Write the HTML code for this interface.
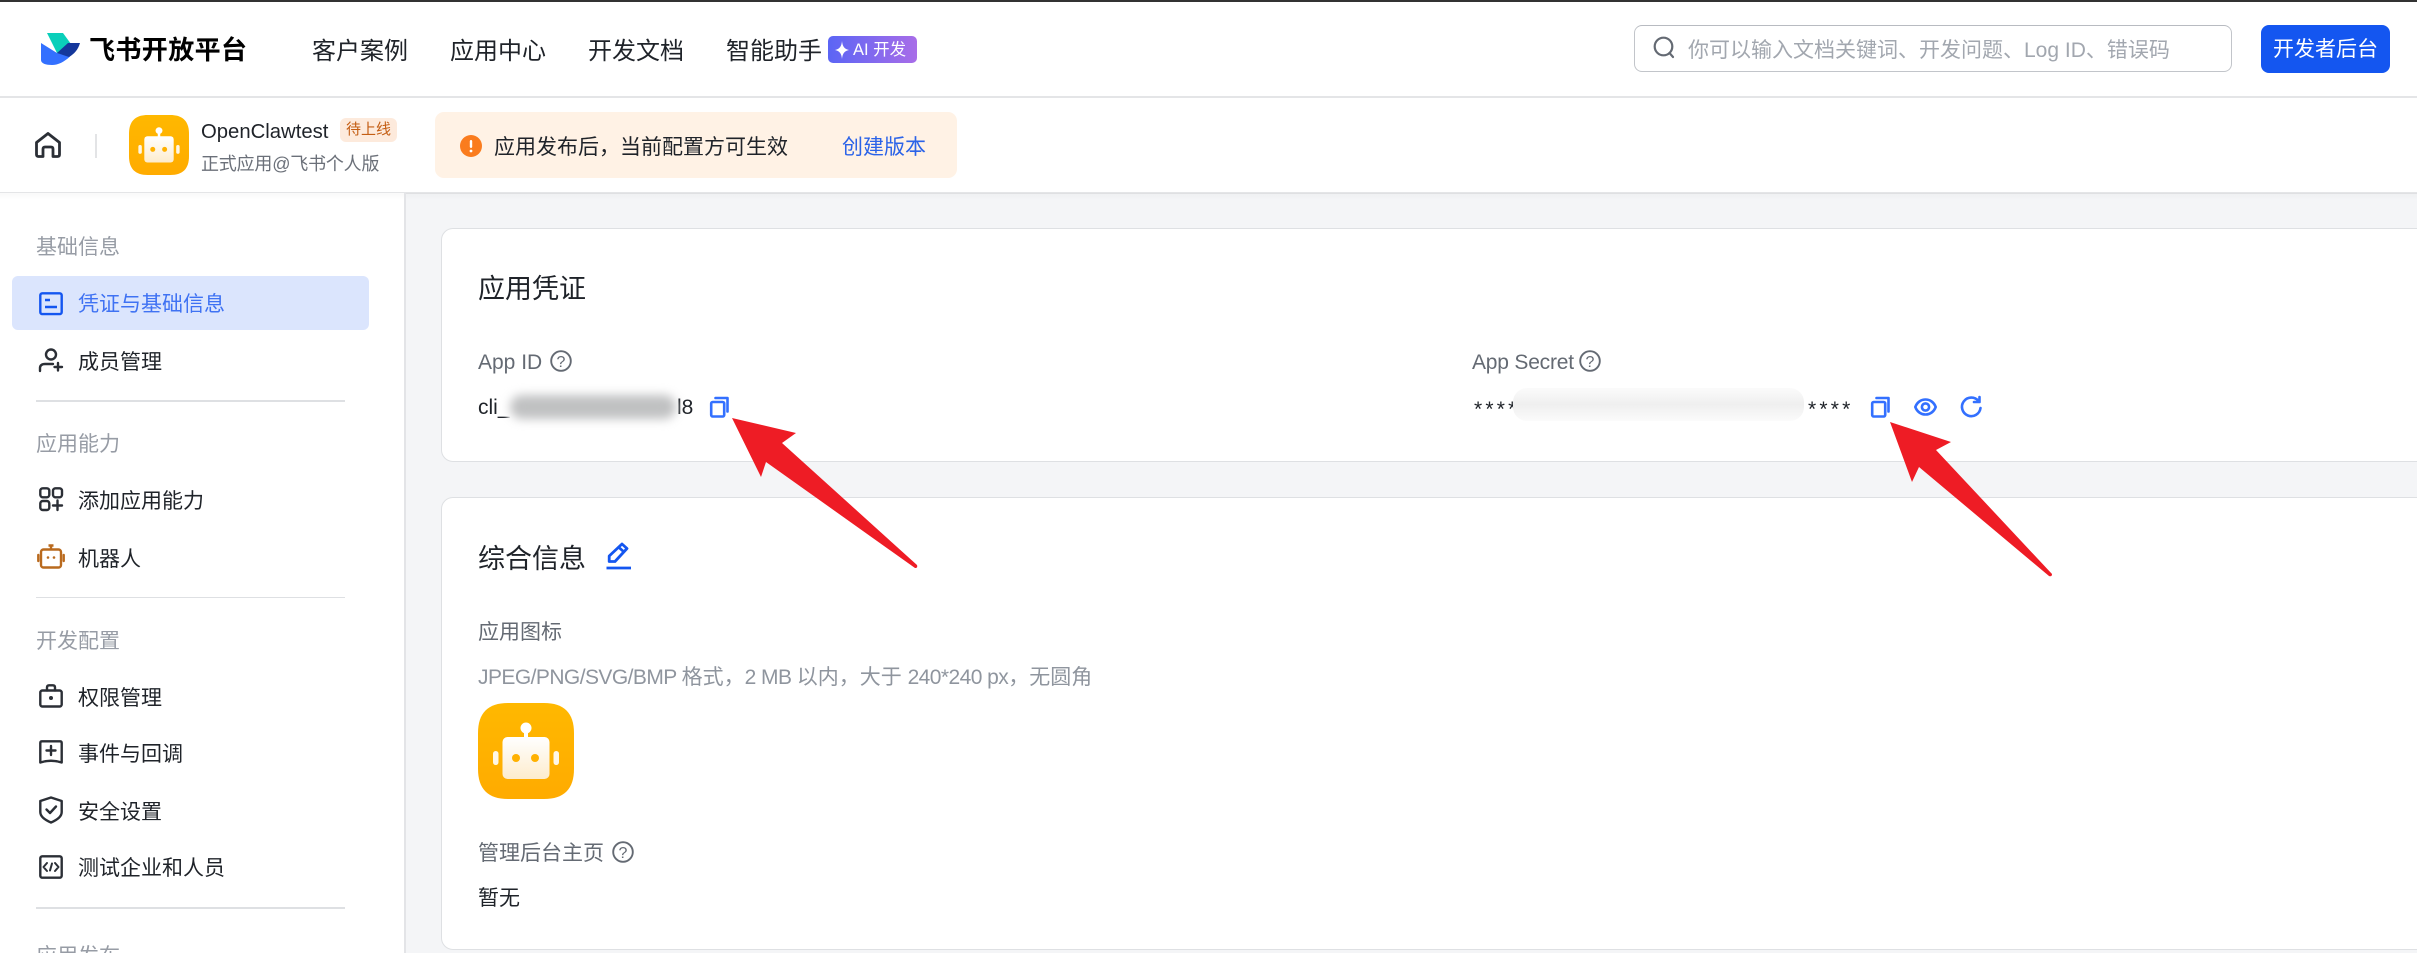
<!DOCTYPE html>
<html lang="zh-CN"><head><meta charset="utf-8"><title>飞书开放平台</title>
<style>
html,body{margin:0;padding:0;width:2417px;height:953px;overflow:hidden;background:#f4f5f7}
body{position:relative;font-family:"Liberation Sans","Noto Sans CJK SC",sans-serif;font-size:21px;color:#1f2329}
.a{position:absolute;white-space:nowrap}
.t{position:absolute;white-space:nowrap;line-height:30px;height:30px;margin-top:1.5px}
svg{position:absolute;overflow:visible}
.ln{position:absolute;background:#dee0e3}
.sec{color:#979ca5}
.lab{color:#646a73}
.ic{fill:none;stroke:#2b2f36;stroke-width:2.4;stroke-linecap:round;stroke-linejoin:round}
.bl{fill:none;stroke:#3370ff;stroke-width:2.6;stroke-linecap:round;stroke-linejoin:round}
.n{letter-spacing:-.56px}
</style></head><body>
<!-- header -->
<div class="a" style="left:0;top:0;width:2417px;height:192px;background:#fff"></div>
<div class="a" style="left:0;top:0;width:2417px;height:1.5px;background:#333"></div>
<div class="ln" style="left:0;top:96px;width:2417px;height:1.5px;background:#e4e5e7"></div>
<div class="ln" style="left:0;top:192px;width:2417px;height:1.5px;background:#e4e5e7"></div>
<svg style="left:0;top:0" width="100" height="96">
<path d="M47 33H63L71 44L58 55Z" fill="#0acfba"/>
<path d="M41 43L57 53L70 56.500C64 62 58 65 52 65C46 65 41 63.500 41 60Z" fill="#3370ff"/>
<path d="M57 53L68 43L80 43C78 50 74 54 69 57Z" fill="#14379b"/>
</svg>
<div class="t" style="left:89px;top:33px;font-size:26px;font-weight:700;color:#000;letter-spacing:.4px">飞书开放平台</div>
<div class="t" style="left:312px;top:35px;font-size:24px">客户案例</div>
<div class="t" style="left:450px;top:35px;font-size:24px">应用中心</div>
<div class="t" style="left:588px;top:35px;font-size:24px">开发文档</div>
<div class="t" style="left:726px;top:35px;font-size:24px">智能助手</div>
<div class="a" style="left:828px;top:36px;width:89px;height:27px;border-radius:5px;background:linear-gradient(90deg,#5b65f5,#a86de8)"></div>
<svg style="left:834px;top:41px" width="16" height="18"><path d="M8 0C8.500 5 10 8 15 9C10 10 8.500 13 8 18C7.500 13 6 10 1 9C6 8 7.500 5 8 0Z" fill="#fff"/></svg>
<div class="t" style="left:853px;top:33.500px;font-size:16.500px;color:#fff">AI 开发</div>
<div class="a" style="left:1634px;top:25px;width:596px;height:45px;border:1.500px solid #c2c5ca;border-top-color:#b8bbc1;border-radius:8px;background:#fff"></div>
<svg style="left:1653px;top:36px" width="24" height="24"><circle cx="10.500" cy="10.500" r="8.800" fill="none" stroke="#646a73" stroke-width="2.200"/><path d="M16.500 17L20 21" stroke="#646a73" stroke-width="2.200" stroke-linecap="round"/></svg>
<div class="t" style="left:1688px;top:34px;color:#a2a7af;font-size:21px">你可以输入文档关键词、开发问题、Log ID、错误码</div>
<div class="a" style="left:2261px;top:25px;width:129px;height:48px;border-radius:8px;background:#1456f0"></div>
<div class="t" style="left:2273px;top:33.500px;color:#fff">开发者后台</div>
<!-- subheader -->
<svg style="left:35px;top:132px" width="26" height="26"><path class="ic" style="stroke-width:2.800" d="M1.500 10.500L13 1.500L24.500 10.500V22.500Q24.500 24.500 22.500 24.500H18V17Q18 15 16 15H10Q8 15 8 17V24.500H3.500Q1.500 24.500 1.500 22.500Z"/></svg>
<div class="ln" style="left:95px;top:134px;width:1.500px;height:24px;background:#e3e4e6"></div>
<svg style="left:129px;top:115px" width="60" height="60" viewBox="0 0 96 96"><defs><linearGradient id="g" x1="0" y1="0" x2="0" y2="1"><stop offset="0" stop-color="#fff"/><stop offset="1" stop-color="#fdeccd"/></linearGradient><linearGradient id="o" x1="0" y1="0" x2="0" y2="1"><stop offset="0" stop-color="#ffb800"/><stop offset="1" stop-color="#ffab00"/></linearGradient></defs>
<path d="M30 0H66C86 0 96 10 96 30V66C96 86 86 96 66 96H30C10 96 0 86 0 66V30C0 10 10 0 30 0Z" fill="url(#o)"/><circle cx="48" cy="25" r="5.500" fill="#fff"/><rect x="46" y="26" width="4" height="10" fill="#fff"/><rect x="24.500" y="34" width="47" height="42" rx="5" fill="url(#g)"/><rect x="15" y="48" width="5.500" height="14" rx="2.700" fill="#fff" opacity=".9"/><rect x="75.500" y="48" width="5.500" height="14" rx="2.700" fill="#fff" opacity=".9"/><ellipse cx="38" cy="55" rx="4" ry="4" fill="#ffb100"/><ellipse cx="57" cy="55" rx="4" ry="4" fill="#ffb100"/></svg>
<div class="t" style="left:201px;top:115px;font-size:20.300px">OpenClawtest</div>
<div class="a" style="left:340px;top:118px;width:57px;height:24px;border-radius:6px;background:#fdeadc"></div>
<div class="t" style="left:346px;top:113.500px;font-size:15px;color:#c45e14">待上线</div>
<div class="t" style="left:201px;top:147px;font-size:18px;color:#6b7079;letter-spacing:-.2px">正式应用@飞书个人版</div>
<div class="a" style="left:435px;top:112px;width:522px;height:66px;border-radius:9px;background:#fff2e5"></div>
<svg style="left:460px;top:135px" width="22" height="22"><circle cx="11" cy="11" r="11" fill="#fa7c1e"/><rect x="9.800" y="5" width="2.400" height="8" rx="1.200" fill="#fff"/><circle cx="11" cy="16" r="1.400" fill="#fff"/></svg>
<div class="t" style="left:494px;top:131px">应用发布后，当前配置方可生效</div>
<div class="t" style="left:842px;top:131px;color:#2b63e8">创建版本</div>
<!-- sidebar -->
<div class="a" style="left:0;top:193px;width:404px;height:760px;background:#fff"></div>
<div class="a" style="left:0;top:193px;width:2417px;height:7px;background:linear-gradient(180deg,rgba(0,0,0,.025),rgba(0,0,0,0))"></div>
<div class="ln" style="left:404px;top:193px;width:1.500px;height:760px;background:#e3e4e7"></div>
<div class="t sec" style="left:36px;top:231px">基础信息</div>
<div class="a" style="left:12px;top:276px;width:357px;height:54px;border-radius:6px;background:#dbe5fd"></div>
<svg style="left:39px;top:292px" width="24" height="24"><rect x="1.300" y="1.300" width="21.400" height="20.800" rx="2" fill="none" stroke="#1456f0" stroke-width="2.400"/><path d="M6 8H11M6 15H18" stroke="#1456f0" stroke-width="2.400"/></svg>
<div class="t" style="left:78px;top:288px;color:#3f72f3">凭证与基础信息</div>
<svg style="left:39px;top:348px" width="24" height="24"><circle cx="12" cy="6.500" r="5" class="ic"/><path class="ic" d="M1 23V20Q1 16 6 16H14M19 15V22.500M15.500 19H23"/></svg>
<div class="t" style="left:78px;top:346px">成员管理</div>
<div class="ln" style="left:36px;top:400px;width:309px;height:2px"></div>
<div class="t sec" style="left:36px;top:428px">应用能力</div>
<svg style="left:39px;top:487px" width="24" height="24"><rect x="1.300" y="1.300" width="9" height="9" rx="2.500" class="ic"/><rect x="14" y="1.300" width="9" height="9" rx="2.500" class="ic"/><rect x="1.300" y="14" width="9" height="9" rx="2.500" class="ic"/><path class="ic" d="M18.500 13.500V23M14 18.500H23"/></svg>
<div class="t" style="left:78px;top:485px">添加应用能力</div>
<svg style="left:37px;top:544px" width="28" height="26" fill="none"><rect x="4" y="5.500" width="20" height="18" rx="2.500" stroke="#b96a1e" stroke-width="2.400"/><path d="M14 1V5M11.500 1.500H16.500" stroke="#b96a1e" stroke-width="2.400"/><path d="M1.300 11V17M26.700 11V17" stroke="#b96a1e" stroke-width="2.400" stroke-linecap="round"/><circle cx="11" cy="13.500" r="1.300" fill="#b96a1e"/><circle cx="17" cy="13.500" r="1.300" fill="#b96a1e"/></svg>
<div class="t" style="left:78px;top:543px">机器人</div>
<div class="ln" style="left:36px;top:596.500px;width:309px;height:1.500px"></div>
<div class="t sec" style="left:36px;top:625px">开发配置</div>
<svg style="left:39px;top:684px" width="24" height="24"><rect x="1.300" y="6.500" width="21.400" height="16" rx="2" class="ic"/><path class="ic" d="M8 6.500V3.500Q8 1.300 10 1.300H14Q16 1.300 16 3.500V6.500"/><circle cx="12" cy="14" r="2" fill="#2b2f36"/></svg>
<div class="t" style="left:78px;top:682px">权限管理</div>
<svg style="left:39px;top:740px" width="24" height="24"><path class="ic" d="M1.300 3Q1.300 1.300 3 1.300H21Q22.700 1.300 22.700 3V22.500Q12 19 1.300 22.500ZM12 6V15M7.500 10.500H16.500"/></svg>
<div class="t" style="left:78px;top:738px">事件与回调</div>
<svg style="left:39px;top:796px" width="24" height="28"><path class="ic" d="M12 1.500L22.700 5V16Q22.700 22 12 26.500Q1.300 22 1.300 16V5ZM7.500 13.500L11 17L17 10.500"/></svg>
<div class="t" style="left:78px;top:796px">安全设置</div>
<svg style="left:39px;top:855px" width="24" height="24"><rect x="1.300" y="1.300" width="21.400" height="21.400" rx="2" class="ic"/><path class="ic" style="stroke-width:2" d="M8 8L4.500 12L8 16M16 8L19.500 12L16 16M13 8.500L11 15.500"/></svg>
<div class="t" style="left:78px;top:852px">测试企业和人员</div>
<div class="ln" style="left:36px;top:907px;width:309px;height:2px"></div>
<div class="t sec" style="left:36px;top:940px">应用发布</div>
<!-- card 1 -->
<div class="a" style="left:441px;top:228px;width:2100px;height:232px;background:#fff;border:1.500px solid #dee0e3;border-radius:12px"></div>
<div class="t" style="left:478px;top:272px;font-size:27px">应用凭证</div>
<div class="t lab" style="left:478px;top:346px">App ID</div>
<svg style="left:550px;top:350px" width="22" height="22"><circle cx="11" cy="11" r="9.800" fill="none" stroke="#646a73" stroke-width="1.900"/><text x="11" y="17" text-anchor="middle" font-size="16" fill="#646a73" font-family="Liberation Sans">?</text></svg>
<div class="t" style="left:478px;top:391.500px">cli_</div>
<div class="t" style="left:677px;top:391.500px">l8</div>
<div class="a" style="left:505px;top:390px;width:172px;height:36px;border-radius:18px;background:#fff;filter:blur(2px)"></div>
<div class="a" style="left:510px;top:395px;width:166px;height:24px;border-radius:12px;background:#c0c1c2;filter:blur(5px)"></div>
<svg style="left:710px;top:396px" width="19" height="22"><rect x="1.200" y="6" width="13" height="14.500" rx="1.500" class="bl"/><path class="bl" d="M5.500 2H17.500V15.500"/></svg>
<div class="t lab" style="left:1472px;top:346.500px;letter-spacing:-.2px">App Secret</div>
<svg style="left:1579px;top:350px" width="22" height="22"><circle cx="11" cy="11" r="9.800" fill="none" stroke="#646a73" stroke-width="1.900"/><text x="11" y="17" text-anchor="middle" font-size="16" fill="#646a73" font-family="Liberation Sans">?</text></svg>
<div class="t" style="left:1474px;top:393.500px;letter-spacing:3.200px">****</div>
<div class="t" style="left:1808px;top:393.500px;letter-spacing:3.200px">****</div>
<div class="a" style="left:1513px;top:388px;width:291px;height:33px;border-radius:14px;background:linear-gradient(180deg,#fbfbfb,#efefef 50%,#fbfbfb)"></div>
<svg style="left:1871px;top:396px" width="19" height="22"><rect x="1.200" y="6" width="13" height="14.500" rx="1.500" class="bl"/><path class="bl" d="M5.500 2H17.500V15.500"/></svg>
<svg style="left:1914px;top:396px" width="23" height="22"><path class="bl" d="M1.300 11C5 1 18 1 21.700 11C18 21 5 21 1.300 11Z"/><circle cx="11.500" cy="11" r="3.600" class="bl"/></svg>
<svg style="left:1960px;top:396px" width="22" height="22"><path class="bl" d="M18.500 5A9.300 9.300 0 1 0 20.500 12M19.500 1V6H14"/></svg>
<!-- card 2 -->
<div class="a" style="left:441px;top:497px;width:2100px;height:451px;background:#fff;border:1.500px solid #dee0e3;border-radius:12px"></div>
<div class="t" style="left:478px;top:542px;font-size:27px">综合信息</div>
<svg style="left:606px;top:542px" width="26" height="28"><path d="M16 2L21 6.500L9 19.500H3.200V14ZM13 5.500L18 10" fill="none" stroke="#1456f0" stroke-width="2.800" stroke-linejoin="round"/><path d="M0.500 26H25" stroke="#1456f0" stroke-width="2.800"/></svg>
<div class="t lab" style="left:478px;top:616px">应用图标</div>
<div class="t" style="left:478px;top:661px;color:#8f959e"><span class="n">JPEG/PNG/SVG/BMP </span>格式，<span class="n">2 MB </span>以内，大于 <span class="n">240*240 px</span>，无圆角</div>
<svg style="left:478px;top:703px" width="96" height="96" viewBox="0 0 96 96">
<path d="M30 0H66C86 0 96 10 96 30V66C96 86 86 96 66 96H30C10 96 0 86 0 66V30C0 10 10 0 30 0Z" fill="url(#o)"/><circle cx="48" cy="25" r="5.500" fill="#fff"/><rect x="46" y="26" width="4" height="10" fill="#fff"/><rect x="24.500" y="34" width="47" height="42" rx="5" fill="url(#g)"/><rect x="15" y="48" width="5.500" height="14" rx="2.700" fill="#fff" opacity=".9"/><rect x="75.500" y="48" width="5.500" height="14" rx="2.700" fill="#fff" opacity=".9"/><ellipse cx="38" cy="55" rx="4" ry="4" fill="#ffb100"/><ellipse cx="57" cy="55" rx="4" ry="4" fill="#ffb100"/></svg>
<div class="t lab" style="left:478px;top:837px">管理后台主页</div>
<svg style="left:612px;top:841px" width="22" height="22"><circle cx="11" cy="11" r="9.800" fill="none" stroke="#646a73" stroke-width="1.900"/><text x="11" y="17" text-anchor="middle" font-size="16" fill="#646a73" font-family="Liberation Sans">?</text></svg>
<div class="t" style="left:478px;top:882px">暂无</div>
<!-- arrows -->
<svg style="left:0;top:0" width="2417" height="953">
<path d="M732 418L796 433L782 443L917 565Q918 568 915 568L766 462L761 477Z" fill="#ee1c25"/>
<path d="M1890 422L1951 442L1936 450L2052 574Q2052 577 2049 576L1919 467L1912 482Z" fill="#ee1c25"/>
</svg>
</body></html>
